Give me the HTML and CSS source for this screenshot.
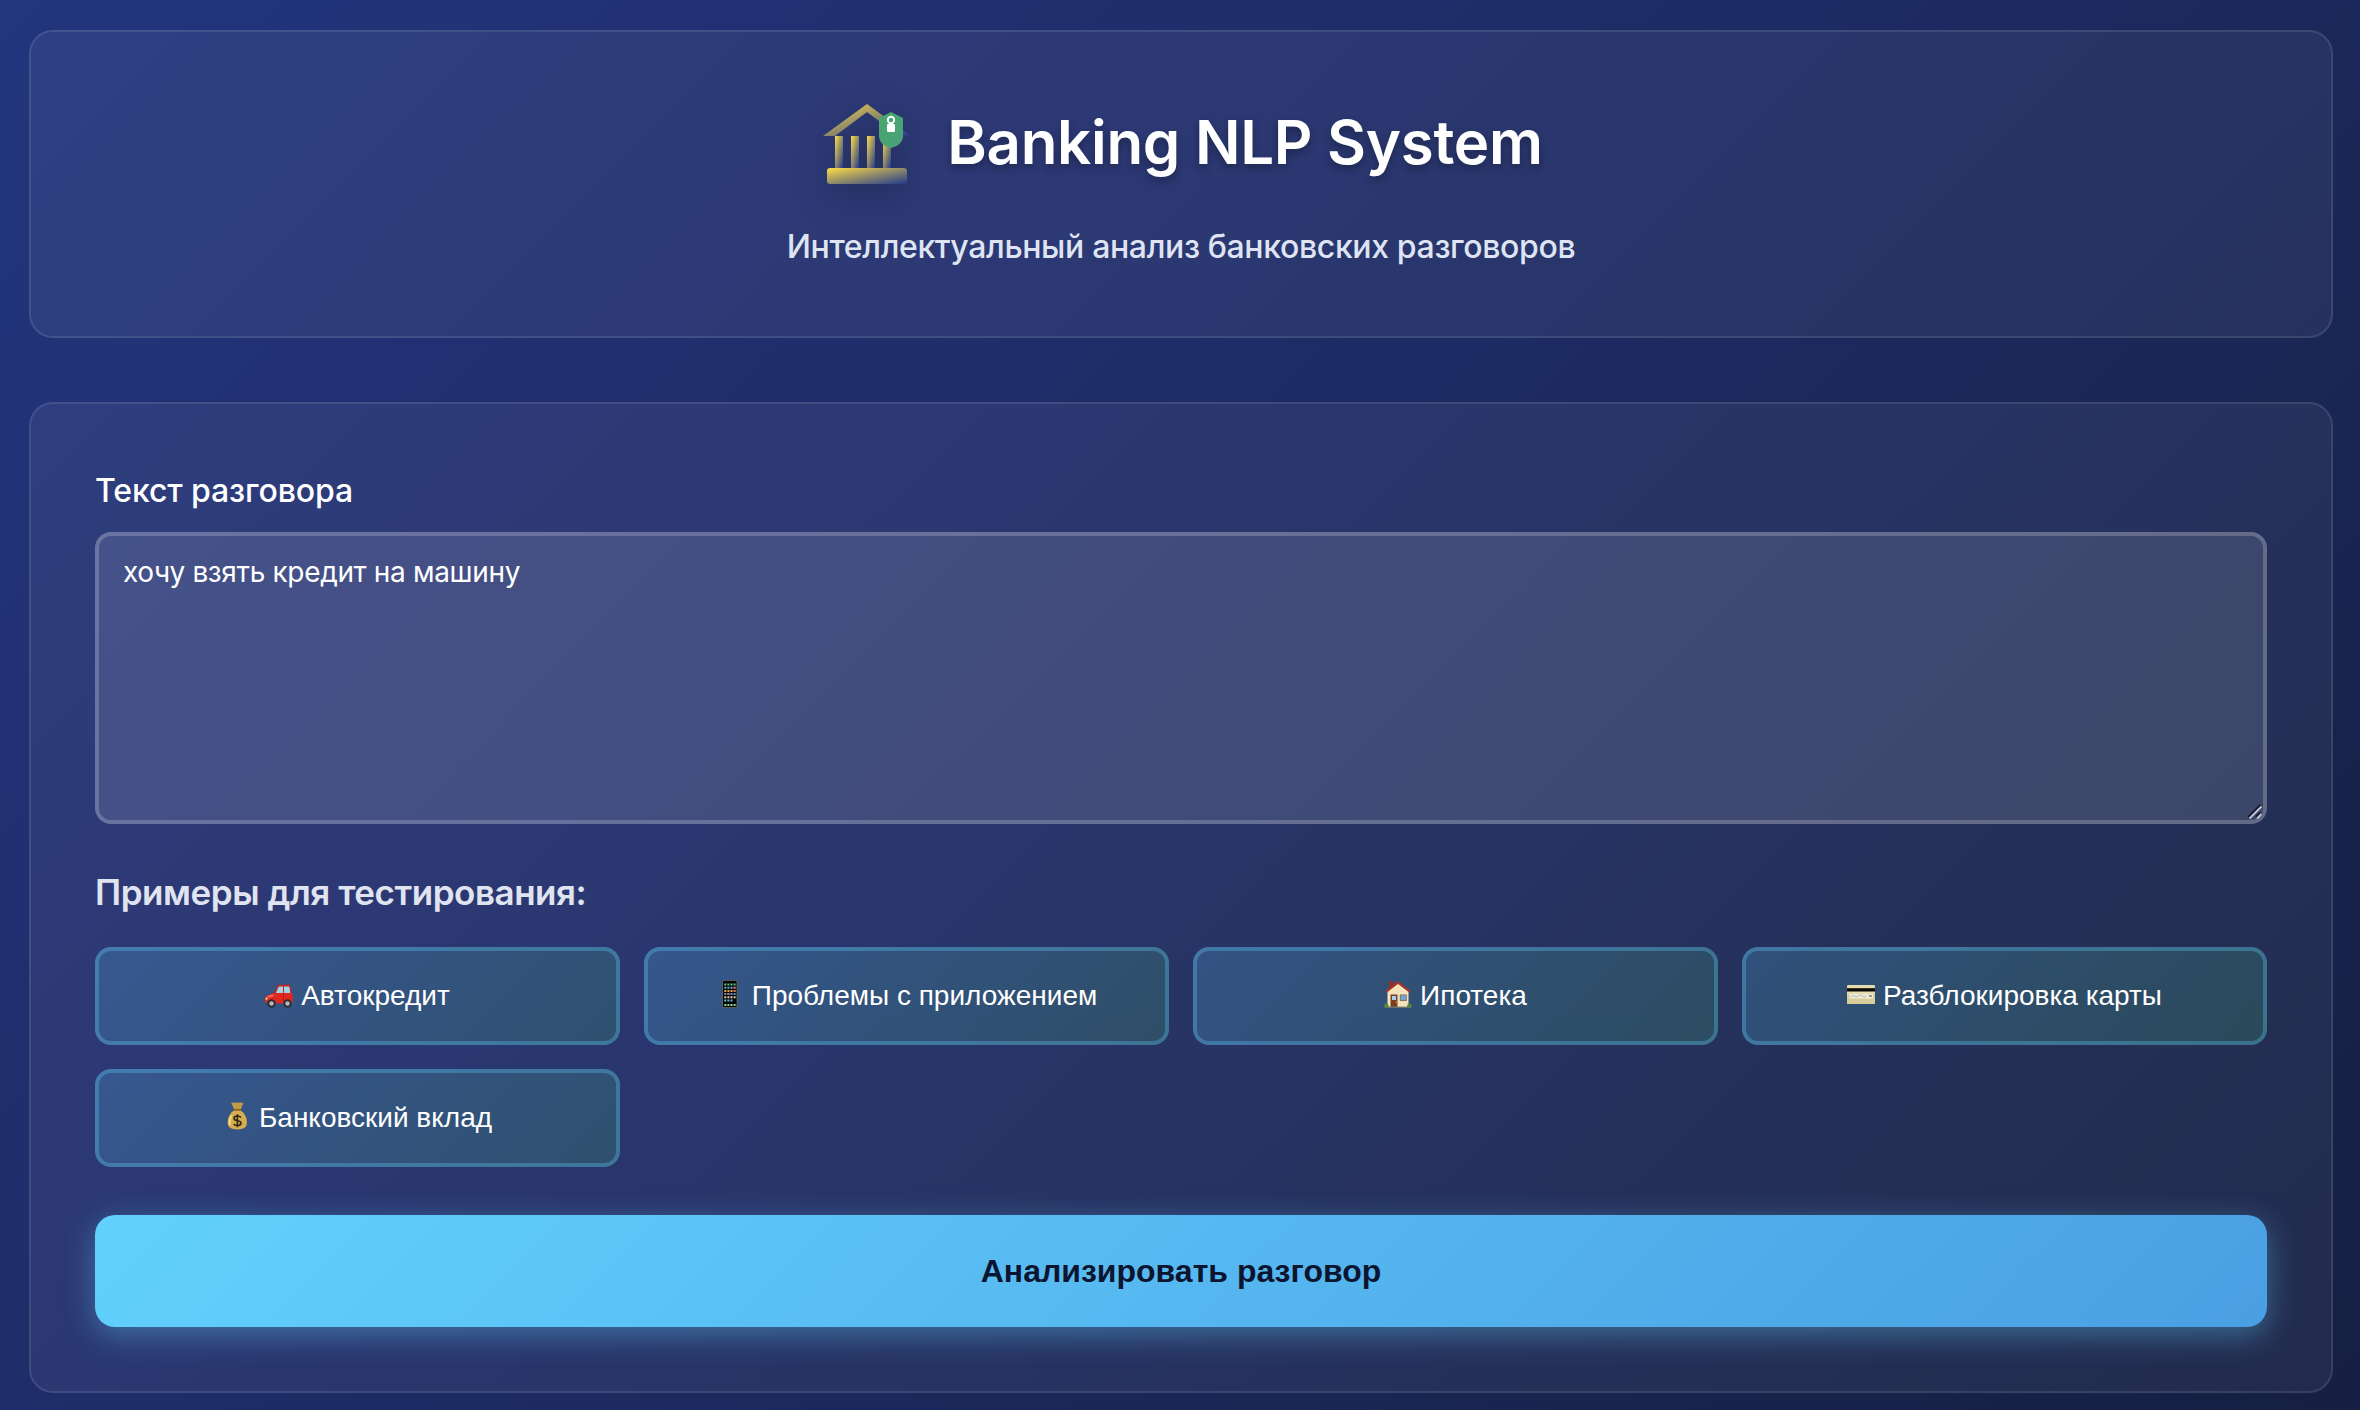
FILE: index.html
```html
<!DOCTYPE html>
<html lang="ru">
<head>
<meta charset="utf-8">
<title>Banking NLP System</title>
<link rel="stylesheet" href="styles.css">
</head>
<body>
<main class="container">
  <header class="card header">
    <div class="brand">
      <svg class="logo" viewBox="0 0 24 24">
        <defs>
          <linearGradient id="gold" x1="0" y1="0" x2="1" y2="1"><stop offset="0" stop-color="#ffdd45"/><stop offset="1" stop-color="#233a8c"/></linearGradient>
          <linearGradient id="green" x1="0" y1="0" x2="1" y2="1"><stop offset="0" stop-color="#48a96b"/><stop offset="1" stop-color="#489f7c"/></linearGradient>
        </defs>
        <path d="M12 2L1 10h3l8-6 8 6h3z" fill="url(#gold)"/>
        <rect x="4" y="10" width="2" height="8" fill="url(#gold)"/>
        <rect x="8" y="10" width="2" height="8" fill="url(#gold)"/>
        <rect x="12" y="10" width="2" height="8" fill="url(#gold)"/>
        <rect x="16" y="10" width="2" height="8" fill="url(#gold)"/>
        <rect x="2" y="18" width="20" height="4" rx="0.8" fill="url(#gold)"/>
        <path d="M18 4l3 1.5v4.5c0 1.6-1.3 2.6-3 3-1.700-.4-3-1.400-3-3V5.500z" fill="url(#green)"/>
        <circle cx="18" cy="6" r="0.8" fill="none" stroke="#fff" stroke-width="0.5"/>
        <rect x="17" y="7" width="2" height="2" rx="0.3" fill="#fff"/>
      </svg>
      <h1 class="title">Banking NLP System</h1>
    </div>
    <p class="subtitle">Интеллектуальный анализ банковских разговоров</p>
  </header>

  <section class="card form">
    <label class="label" for="text">Текст разговора</label>
    <div class="field">
      <textarea class="input" id="text" spellcheck="false">хочу взять кредит на машину</textarea>
      <svg class="grip" viewBox="0 0 16 16">
        <path d="M2 13.500L14 1.500M9.500 13.500L14 9" stroke="#15192f" stroke-width="3.600"/>
        <path d="M2.500 14.500L14.500 2.500M10 14.500L14.500 10" stroke="#c3c7d6" stroke-width="1.800"/>
      </svg>
    </div>
    <h3 class="examples-title">Примеры для тестирования:</h3>
    <div class="examples">
      <button class="example">
        <svg class="emoji" viewBox="0 0 28 28">
          <path d="M8.500 14L12 6.500Q12.600 4.800 14.500 4.800H23.500q2 0 2.300 2L27 16z" fill="#c9241c"/>
          <path d="M11 13l2.300-5.700q.4-.8 1.500-.8h3.200v6.500zM19 6.500h4.300q1 0 1.200 1l.8 5.500H19z" fill="#9fd3e3"/>
          <path d="M0 21q-.5-4 2-5.500 2-1.200 6-2l3-.5h15.500q1.500 2 1.300 8.500l-1.800 2H2z" fill="#e0281f"/>
          <path d="M2 16.500q3-1.800 7-1.900l-1 2.200q-3 .9-6.500.7z" fill="#ff6b5e"/>
          <path d="M18.500 14v7" stroke="#a51812" stroke-width=".7"/>
          <circle cx="6.500" cy="23.500" r="4.300" fill="#2b2f35"/><circle cx="6.500" cy="23.500" r="2.200" fill="#b5b9bd"/>
          <circle cx="22.500" cy="23.500" r="4.300" fill="#2b2f35"/><circle cx="22.500" cy="23.500" r="2.200" fill="#b5b9bd"/>
          <circle cx="1.500" cy="18.800" r="1" fill="#ffe9a0"/>
        </svg>
        Автокредит
      </button>
      <button class="example">
        <svg class="emoji" viewBox="0 0 28 28">
          <rect x="6.500" y=".4" width="14.500" height="27.200" rx="1.600" fill="#050505" stroke="#6e6d60" stroke-width=".8"/>
          <g fill="none" stroke-width="2" stroke-dasharray="2 1.100">
            <path d="M8.300 4.500h11.500" stroke="#56c48a"/>
            <path d="M8.300 7.700h11.500" stroke="#6aa9dd"/>
            <path d="M8.300 10.900h11.500" stroke="#d8b04c"/>
            <path d="M8.300 14.100h11.500" stroke="#5b95d8"/>
            <path d="M8.300 17.300h11.500" stroke="#e5cdb8"/>
            <path d="M8.300 20.500h8.500" stroke="#5cc0dc"/>
            <path d="M8.300 25h11.500" stroke="#8fd79a"/>
          </g>
          <path d="M17.600 7.700h2M11.400 14.100h2M17.600 10.900h2" stroke="#d95b4a" stroke-width="2"/>
        </svg>
        Проблемы с приложением
      </button>
      <button class="example">
        <svg class="emoji" viewBox="0 0 28 28">
          <path d="M5 1h4.500v6L5 11z" fill="#8e3327"/>
          <path d="M3.500 11.500L14 2.500l10.500 9V27h-21z" fill="#f4e3bd"/>
          <path d="M14 1L1.200 11.300l1.300 1.500L14 4l11.500 8.800 1.300-1.500z" fill="#a5352a"/>
          <rect x="6.500" y="14.500" width="7" height="12.500" fill="#7a4025"/>
          <rect x="8" y="16" width="4" height="4" fill="#a9d0ee"/>
          <rect x="15.800" y="14.500" width="7" height="6.500" fill="#8a6a50"/>
          <rect x="16.700" y="15.300" width="5.200" height="4.900" fill="#6fa6da"/>
          <path d="M0 27q0-3.800 2.300-3.800T5 27zM23 27q.3-3.800 2.500-3.800T28 27z" fill="#4f8a34"/>
          <path d="M1 27.200h26" stroke="#7c7a68" stroke-width="1.200"/>
          <path d="M12.300 21.500v1.500" stroke="#e7c067" stroke-width=".8"/>
        </svg>
        Ипотека
      </button>
      <button class="example">
        <svg class="emoji" viewBox="0 0 28 28">
          <rect x="0" y="5" width="28" height="19" rx="1.200" fill="#e3dcae"/>
          <path d="M0 14h28v8.800q0 1.200-1.200 1.200H1.200Q0 24 0 22.800z" fill="#d6cd98"/>
          <rect x="0" y="8.200" width="28" height="3.300" fill="#0b0a08"/>
          <rect x="2.500" y="14" width="23.500" height="4.500" fill="#eeebd8"/>
          <path d="M3.500 17q2-2.500 4-.8t4-.3 4 .2 4-.4" stroke="#a7b0c0" stroke-width=".9" fill="none"/>
          <path d="M22 16h3" stroke="#444" stroke-width="1"/>
        </svg>
        Разблокировка карты
      </button>
      <button class="example">
        <svg class="emoji" viewBox="0 0 28 28">
          <path d="M8 .5q1.500 1 3-.3 1.500 1 3 0 1.500 1 3 0 1.500 1.300 3.500.3L17.500 8h-6z" fill="#c39a45"/>
          <path d="M11.300 8h6q6.700 5 6.700 12.500 0 7-9.700 7t-9.700-7Q4.600 13 11.300 8z" fill="#d6ac50"/>
          <path d="M8.500 13.500q-2.500 5.500-1.500 9.500" stroke="#f6dc8f" stroke-width="1.800" fill="none"/>
          <path d="M10.800 7.800h7" stroke="#8c5a22" stroke-width="1.700"/>
          <path d="M18 15.400q-1.200-1.400-3.600-1.400-3.400 0-3.400 2.300 0 2 3.400 2.400 3.600.4 3.600 2.500T14.400 23.500q-2.600 0-3.800-1.500M14.400 12.200v13" stroke="#2c2616" stroke-width="1.600" fill="none"/>
        </svg>
        Банковский вклад
      </button>
    </div>
    <button class="submit">Анализировать разговор</button>
  </section>
</main>
</body>
</html>
```
FILE: styles.css
```css
* { box-sizing: border-box; margin: 0; }

body {
  height: 1410px;
  overflow: hidden;
  padding: 30px 27px 0 29px;
  font-family: Inter, "Liberation Sans", sans-serif;
  color: #fff;
  background: linear-gradient(135deg, #22367d 0%, #212f70 25%, #1d2b64 48%, #192551 75%, #161f43 100%);
}

.container { display: flex; flex-direction: column; gap: 64px; }

.card {
  padding: 64px;
  border: 2px solid rgba(255, 255, 255, 0.1);
  border-radius: 24px;
  background: rgba(255, 255, 255, 0.055);
}

.header { height: 308px; text-align: center; }

.brand { display: flex; align-items: center; justify-content: center; gap: 32px; height: 96px; }

.logo { width: 96px; height: 96px; filter: drop-shadow(0 8px 16px rgba(0, 0, 0, 0.25)); }

.title {
  padding-bottom: 4px;
  font-size: 60px;
  line-height: 72px;
  font-weight: 600;
  letter-spacing: -0.28px;
  text-shadow: 0 4px 8px rgba(0, 0, 0, 0.3);
}

.subtitle {
  margin-top: 29px;
  font-size: 32px;
  line-height: 51px;
  font-weight: 500;
  letter-spacing: -0.36px;
  color: #dfe4f2;
}

.form { display: flex; flex-direction: column; height: 991px; }

.label { font-size: 32px; line-height: 45px; font-weight: 500; letter-spacing: -0.1px; }

.field { position: relative; height: 292px; margin-top: 19px; }

.input {
  display: block;
  width: 100%;
  height: 292px;
  padding: 14px 24px;
  border: 4px solid rgba(255, 255, 255, 0.2);
  border-radius: 16px;
  background: rgba(255, 255, 255, 0.115);
  color: #fff;
  font-family: inherit;
  font-size: 28px;
  line-height: 45px;
  letter-spacing: -0.34px;
  resize: none;
  outline: none;
}

.grip { position: absolute; right: 4px; bottom: 4px; width: 16px; height: 16px; fill: none; }

.examples-title {
  margin-top: 40px;
  font-size: 35px;
  line-height: 56px;
  font-weight: 600;
  letter-spacing: -0.45px;
  color: #e0e4f1;
}

.examples { display: grid; grid-template-columns: repeat(4, 1fr); gap: 24px; margin-top: 27px; }

.example {
  display: flex;
  align-items: center;
  justify-content: center;
  gap: 8px;
  height: 98px;
  padding: 0;
  border: 4px solid rgba(99, 210, 255, 0.3);
  border-radius: 16px;
  background: linear-gradient(135deg, rgba(99, 210, 255, 0.2), rgba(72, 187, 120, 0.2)) border-box;
  color: #fff;
  font: 28px "Liberation Sans", Arial, sans-serif;
}

.emoji { width: 28px; height: 28px; margin-bottom: 4px; }

.submit {
  height: 112px;
  margin-top: 48px;
  border: 0;
  border-radius: 20px;
  background: linear-gradient(135deg, #62d1fd, #4a9fe3);
  box-shadow: 0 8px 30px rgba(99, 210, 255, 0.38);
  color: #0c1530;
  font: bold 32px "Liberation Sans", Arial, sans-serif;
}
```
